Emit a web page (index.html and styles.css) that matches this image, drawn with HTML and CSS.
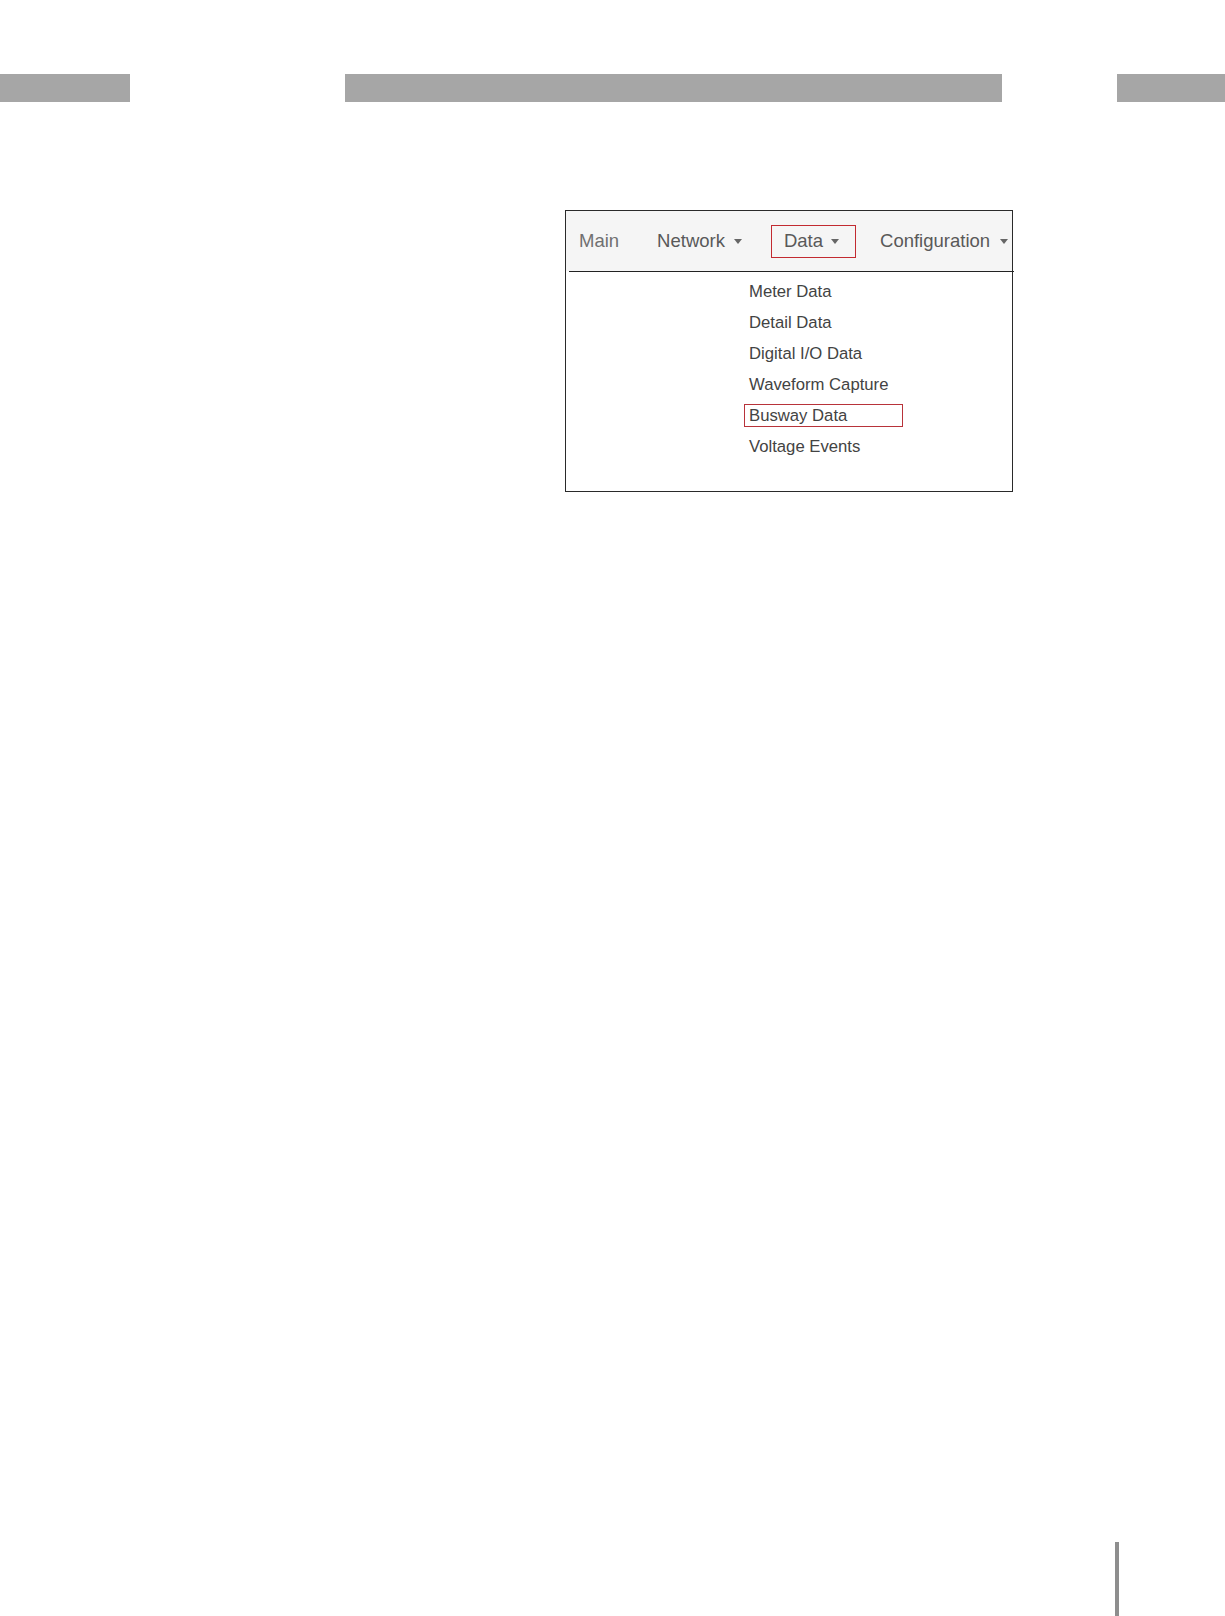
FILE: index.html
```html
<!DOCTYPE html>
<html>
<head>
<meta charset="utf-8">
<link rel="stylesheet" href="styles.css">
</head>
<body>
<div class="header">
  <div class="bar bar-left"></div>
  <div class="bar bar-mid"></div>
  <div class="bar bar-right"></div>
</div>
<div class="figure">
  <div class="nav">
    <span class="nav-item main">Main</span>
    <span class="nav-item network">Network<i class="caret"></i></span>
    <span class="nav-item data">Data<i class="caret"></i></span>
    <span class="nav-item config">Configuration<i class="caret"></i></span>
  </div>
  <div class="rule"></div>
  <ul class="menu">
    <li>Meter Data</li>
    <li>Detail Data</li>
    <li>Digital I/O Data</li>
    <li>Waveform Capture</li>
    <li><span class="hl">Busway Data</span></li>
    <li>Voltage Events</li>
  </ul>
</div>
<div class="footer-line"></div>
</body>
</html>
```
FILE: styles.css
```css
html, body {
  margin: 0;
  padding: 0;
  background: #ffffff;
}
body {
  width: 1225px;
  height: 1616px;
  overflow: hidden;
  font-family: "Liberation Sans", Arial, sans-serif;
}
.header {
  display: flex;
  margin-top: 74px;
  height: 28px;
}
.bar {
  background: #a6a6a6;
  height: 28px;
}
.bar-left { width: 130px; }
.bar-mid { margin-left: 215px; width: 657px; }
.bar-right { margin-left: 115px; width: 108px; }

.figure {
  margin-top: 108px;
  margin-left: 565px;
  width: 446px;
  height: 280px;
  border: 1px solid #2a2a2a;
  background: #ffffff;
}
.nav {
  display: flex;
  align-items: center;
  height: 60px;
  background: #f5f5f5;
  padding-left: 13px;
  font-size: 18.5px;
  color: #595959;
  line-height: 60px;
  white-space: nowrap;
}
.nav-item {
  display: inline-flex;
  align-items: center;
}
.main { color: #707070; }
.network { margin-left: 38px; }
.network .caret { margin-left: 9px; }
.data {
  margin-left: 29px;
  height: 31px;
  line-height: 30px;
  border: 1px solid #c22a30;
  padding: 0 16px 0 12px;
}
.data .caret { margin-left: 8px; }
.config { margin-left: 24px; }
.caret {
  display: inline-block;
  width: 0;
  height: 0;
  margin-left: 10px;
  border-top: 5px solid #666666;
  border-left: 4.5px solid transparent;
  border-right: 4.5px solid transparent;
}
.rule {
  height: 1px;
  background: #222222;
  margin-left: 3px;
  margin-right: -2px;
}
.menu {
  list-style: none;
  margin: 0;
  padding: 4px 0 0 183px;
  font-size: 16.7px;
  color: #434343;
}
.menu li {
  height: 31px;
  line-height: 31px;
  display: flex;
  align-items: center;
  white-space: nowrap;
}
.hl {
  display: inline-block;
  box-sizing: border-box;
  width: 159px;
  height: 23px;
  line-height: 21px;
  margin-left: -5px;
  padding-left: 4px;
  border: 1px solid #b8333a;
}
.footer-line {
  margin-top: 1050px;
  margin-left: 1115px;
  width: 4px;
  height: 74px;
  background: #8e8e8e;
}
```
